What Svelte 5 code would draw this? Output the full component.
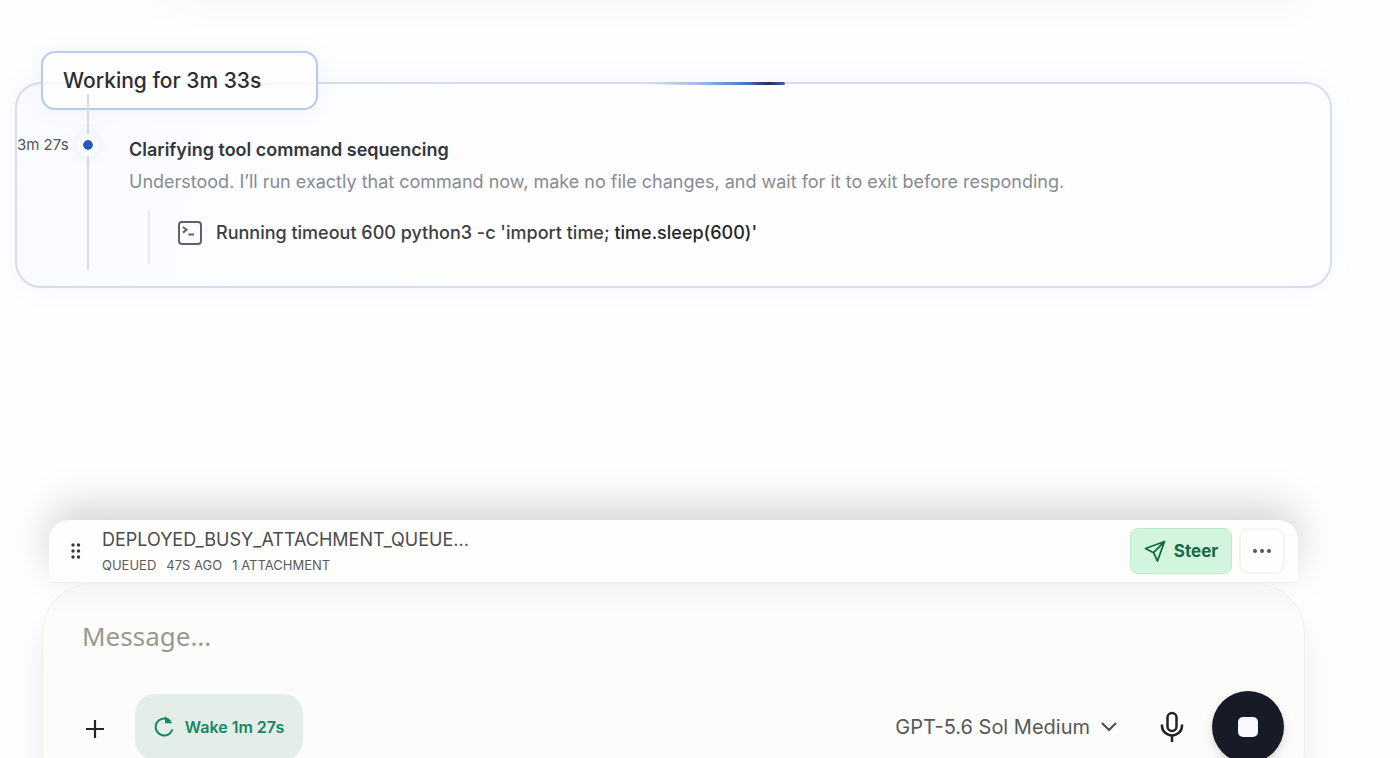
<script>
    let message = $state("");
    let running = $state(true);

    const step = {
        elapsed: "3m 27s",
        title: "Clarifying tool command sequencing",
        body: "Understood. I’ll run exactly that command now, make no file changes, and wait for it to exit before responding.",
    };

    const queued = {
        name: "DEPLOYED_BUSY_ATTACHMENT_QUEUE...",
        meta: ["QUEUED", "47S AGO", "1 ATTACHMENT"],
    };
</script>

<main class="chat">
    <section class="transcript">
        <div class="previous"></div>

        <article class="work-card">
            <span class="progress"></span>
            <h2 class="work-title">Working for 3m 33s</h2>

            <time class="elapsed">{step.elapsed}</time>
            <div class="rail"><span class="dot"></span></div>
            <div class="step">
                <h3>{step.title}</h3>
                <p>{step.body}</p>
                <div class="command">
                    <svg width="24" height="24" viewBox="0 0 24 24" fill="none" stroke="#606265" stroke-width="2">
                        <rect x="1" y="1" width="22" height="22" rx="3" />
                        <path d="M5 6l3.500 2.800-3.500 2.800M10.500 13.500h5.500" />
                    </svg>
                    <span>Running timeout 600 python3 -c 'import time; <b>time.sleep(600)'</b></span>
                </div>
            </div>
        </article>
    </section>

    <footer class="dock">
        <div class="queue">
            <button class="drag" aria-label="Reorder">
                <svg width="10" height="16" viewBox="0 0 10 16" fill="#35363d">
                    {#each [2, 8, 14] as y}
                        <circle cx="2" cy={y} r="1.7" />
                        <circle cx="7.500" cy={y} r="1.7" />
                    {/each}
                </svg>
            </button>
            <div class="queue-text">
                <div class="queue-name">{queued.name}</div>
                <div class="queue-meta">
                    {#each queued.meta as item}
                        <span>{item}</span>
                    {/each}
                </div>
            </div>
            <button class="steer">
                <svg width="22" height="22" viewBox="0 0 22 22" fill="none" stroke="#126b42" stroke-width="1.8" stroke-linejoin="round">
                    <path d="M20.5 1.5L1.5 8.5l8 4.2 4 8.3zM20.5 1.5l-11 11.2" />
                </svg>
                Steer
            </button>
            <button class="more" aria-label="More">
                <svg width="20" height="6" viewBox="0 0 20 6" fill="#57534f">
                    <circle cx="3" cy="3" r="2" />
                    <circle cx="10" cy="3" r="2" />
                    <circle cx="17" cy="3" r="2" />
                </svg>
            </button>
        </div>

        <form class="composer" onsubmit={(e) => e.preventDefault()}>
            <input class="message" type="text" placeholder="Message..." aria-label="Message" bind:value={message} />
            <div class="toolbar">
                <button type="button" class="icon-button" aria-label="Add attachment">
                    <svg width="20" height="24" viewBox="0 0 20 24" fill="none" stroke="#252525" stroke-width="2.2">
                        <path d="M10 5v18M1 14h18" />
                    </svg>
                </button>
                <button type="button" class="wake">
                    <svg width="20" height="22" viewBox="0 0 20 22" fill="none" stroke="#168765" stroke-width="2">
                        <path d="M18.300 13.500A8.500 8.500 0 1 1 10 2.500c2.800 0 5 1.200 6.500 3" />
                        <path d="M11 0l7.500 7.200h-7.500z" fill="#168765" stroke="none" />
                    </svg>
                    Wake 1m 27s
                </button>
                <button type="button" class="model">
                    GPT-5.6 Sol Medium
                    <svg width="18" height="12" viewBox="0 0 18 12" fill="none" stroke="#4b4b4b" stroke-width="2">
                        <path d="M2 2l7 7 7-7" />
                    </svg>
                </button>
                <button type="button" class="mic" aria-label="Dictate">
                    <svg width="24" height="32" viewBox="0 0 24 32" fill="none" stroke="#222" stroke-width="2.5">
                        <rect x="7.500" y="2" width="9" height="18" rx="4.500" />
                        <path d="M2 13.500v1.500a10 9.500 0 0 0 20 0v-1.500M12 24.500v6.500" />
                    </svg>
                </button>
                <button type="button" class="stop" aria-label="Stop" onclick={() => (running = !running)}>
                    <span></span>
                </button>
            </div>
        </form>
    </footer>
</main>

<style>
    :global(body) {
        background: #fefefe;
    }

    .chat {
        height: 100vh;
        overflow: hidden;
        display: flex;
        flex-direction: column;
        font-family: Inter, "Liberation Sans", sans-serif;
        color: #2c2e33;
    }

    button {
        display: flex;
        align-items: center;
        justify-content: center;
        border: 0;
        padding: 0;
        background: none;
        font: inherit;
        cursor: pointer;
    }

    .transcript {
        flex: 1;
        padding: 0 68px 0 15px;
    }

    .previous {
        height: 34px;
        margin-bottom: 48px;
        background:
            linear-gradient(90deg, #fefefe 6%, transparent 16%, transparent 96%, #fefefe),
            linear-gradient(#f9f9f9, #fefefe);
    }

    .work-card {
        position: relative;
        display: grid;
        grid-template-columns: 54px 34px 1fr;
        padding: 10px 20px 16px 0;
        border: 2px solid #d6ddf0;
        border-radius: 26px;
        background: linear-gradient(100deg, #f9fbff, #fefefe 40%);
        box-shadow: 0 0 28px rgba(80, 130, 230, 0.06);
    }

    .progress {
        position: absolute;
        top: -2px;
        left: 48%;
        width: 138px;
        height: 3px;
        border-radius: 0 3px 3px 0;
        background: linear-gradient(90deg, transparent, #9fb6e6 40%, #4a73c8 72%, #26304a 88%, #3b62b8);
    }

    .work-title {
        position: absolute;
        top: -33px;
        left: 24px;
        width: 277px;
        box-sizing: border-box;
        margin: 0;
        padding: 14px 20px 13px;
        border: 2px solid #b9c9ec;
        border-radius: 14px;
        background: linear-gradient(#fefefe 30px, #eff0f6 30px, #fefefe 32px);
        box-shadow: 0 0 22px rgba(80, 130, 230, 0.07);
        font-size: 21px;
        line-height: 28px;
        font-weight: 500;
    }

    .elapsed {
        padding-top: 40px;
        font-size: 15px;
        line-height: 22px;
        color: #53565c;
        white-space: nowrap;
    }

    .rail {
        display: flex;
        justify-content: center;
        background: linear-gradient(#dadbdf, #dadbdf) center / 2px 100% no-repeat;
        z-index: 1;
    }

    .dot {
        width: 10px;
        height: 10px;
        margin-top: 40px;
        border: 6px solid #fcfdff;
        border-radius: 50%;
        background: #2358bd;
        background-clip: padding-box;
        box-shadow: 0 0 14px rgba(60, 110, 220, 0.12);
        align-self: flex-start;
    }

    .step {
        padding: 40px 0 6px 24px;
    }

    h3,
    p {
        margin: 0;
        font-size: 18px;
        line-height: 32px;
    }

    h3 {
        font-weight: 600;
        color: #34363b;
    }

    p {
        color: #878b92;
    }

    .command {
        display: flex;
        align-items: center;
        gap: 14px;
        height: 54px;
        margin: 12px 0 0 19px;
        padding: 0 0 8px 28px;
        box-sizing: border-box;
        border-left: 2px solid #e8e9eb;
        font-size: 18px;
        line-height: 24px;
        font-weight: 500;
        color: #3c3e42;
    }

    .command b {
        font-weight: 500;
        color: #24262a;
    }

    .dock {
        margin: 0 95px -44px 42px;
    }

    .queue {
        position: relative;
        display: flex;
        align-items: center;
        height: 63px;
        margin: 0 7px;
        padding: 0 13px 0 21px;
        box-sizing: border-box;
        border-bottom: 1px solid #efefec;
        border-radius: 20px 20px 0 0;
        background: #fefefc;
        box-shadow: 0 -14px 40px rgba(0, 0, 0, 0.17);
    }

    .drag {
        width: 12px;
    }

    .queue-text {
        flex: 1;
        margin-left: 20px;
    }

    .queue-name {
        font-size: 18px;
        line-height: 28px;
        color: #4a4b4e;
    }

    .queue-meta {
        display: flex;
        gap: 10px;
        font-size: 13px;
        line-height: 22px;
        color: #5a5b5e;
    }

    .steer {
        gap: 8px;
        width: 102px;
        height: 46px;
        border: 1px solid #bfe9cd;
        border-radius: 8px;
        background: #d3f5de;
        color: #126b42;
        font-size: 17px;
        font-weight: 700;
    }

    .more {
        width: 46px;
        height: 46px;
        margin-left: 7px;
        border: 2px solid #f6f3f3;
        border-radius: 10px;
    }

    .composer {
        position: relative;
        padding: 24px 20px 38px 24px;
        border: 1px solid #efefec;
        border-radius: 50px;
        background: linear-gradient(#f5f4f2, #fcfcfa 28px);
        box-shadow: 0 28px 36px rgba(0, 0, 0, 0.08);
    }

    .message {
        display: block;
        width: 100%;
        height: 56px;
        box-sizing: border-box;
        border: 0;
        padding: 0 15px;
        outline: none;
        background: none;
        font-family: "Noto Sans", sans-serif;
        font-size: 26px;
        color: #2c2e33;
    }

    .message::placeholder {
        color: #999893;
    }

    .toolbar {
        display: flex;
        align-items: center;
        margin-top: 27px;
    }

    .icon-button {
        width: 56px;
        height: 56px;
    }

    .wake {
        gap: 11px;
        width: 168px;
        height: 66px;
        margin-left: 12px;
        border-radius: 20px;
        background: #e3eee8;
        color: #168765;
        font-size: 16px;
        font-weight: 600;
    }

    .model {
        gap: 10px;
        margin-left: auto;
        color: #57585a;
        font-size: 20px;
    }

    .mic {
        margin-left: 42px;
    }

    .stop {
        width: 72px;
        height: 72px;
        margin-left: 28px;
        border-radius: 50%;
        background: #171b25;
        box-shadow: 0 4px 10px rgba(0, 0, 0, 0.15);
    }

    .stop span {
        width: 20px;
        height: 20px;
        border-radius: 5px;
        background: #f7fbfe;
    }
</style>
